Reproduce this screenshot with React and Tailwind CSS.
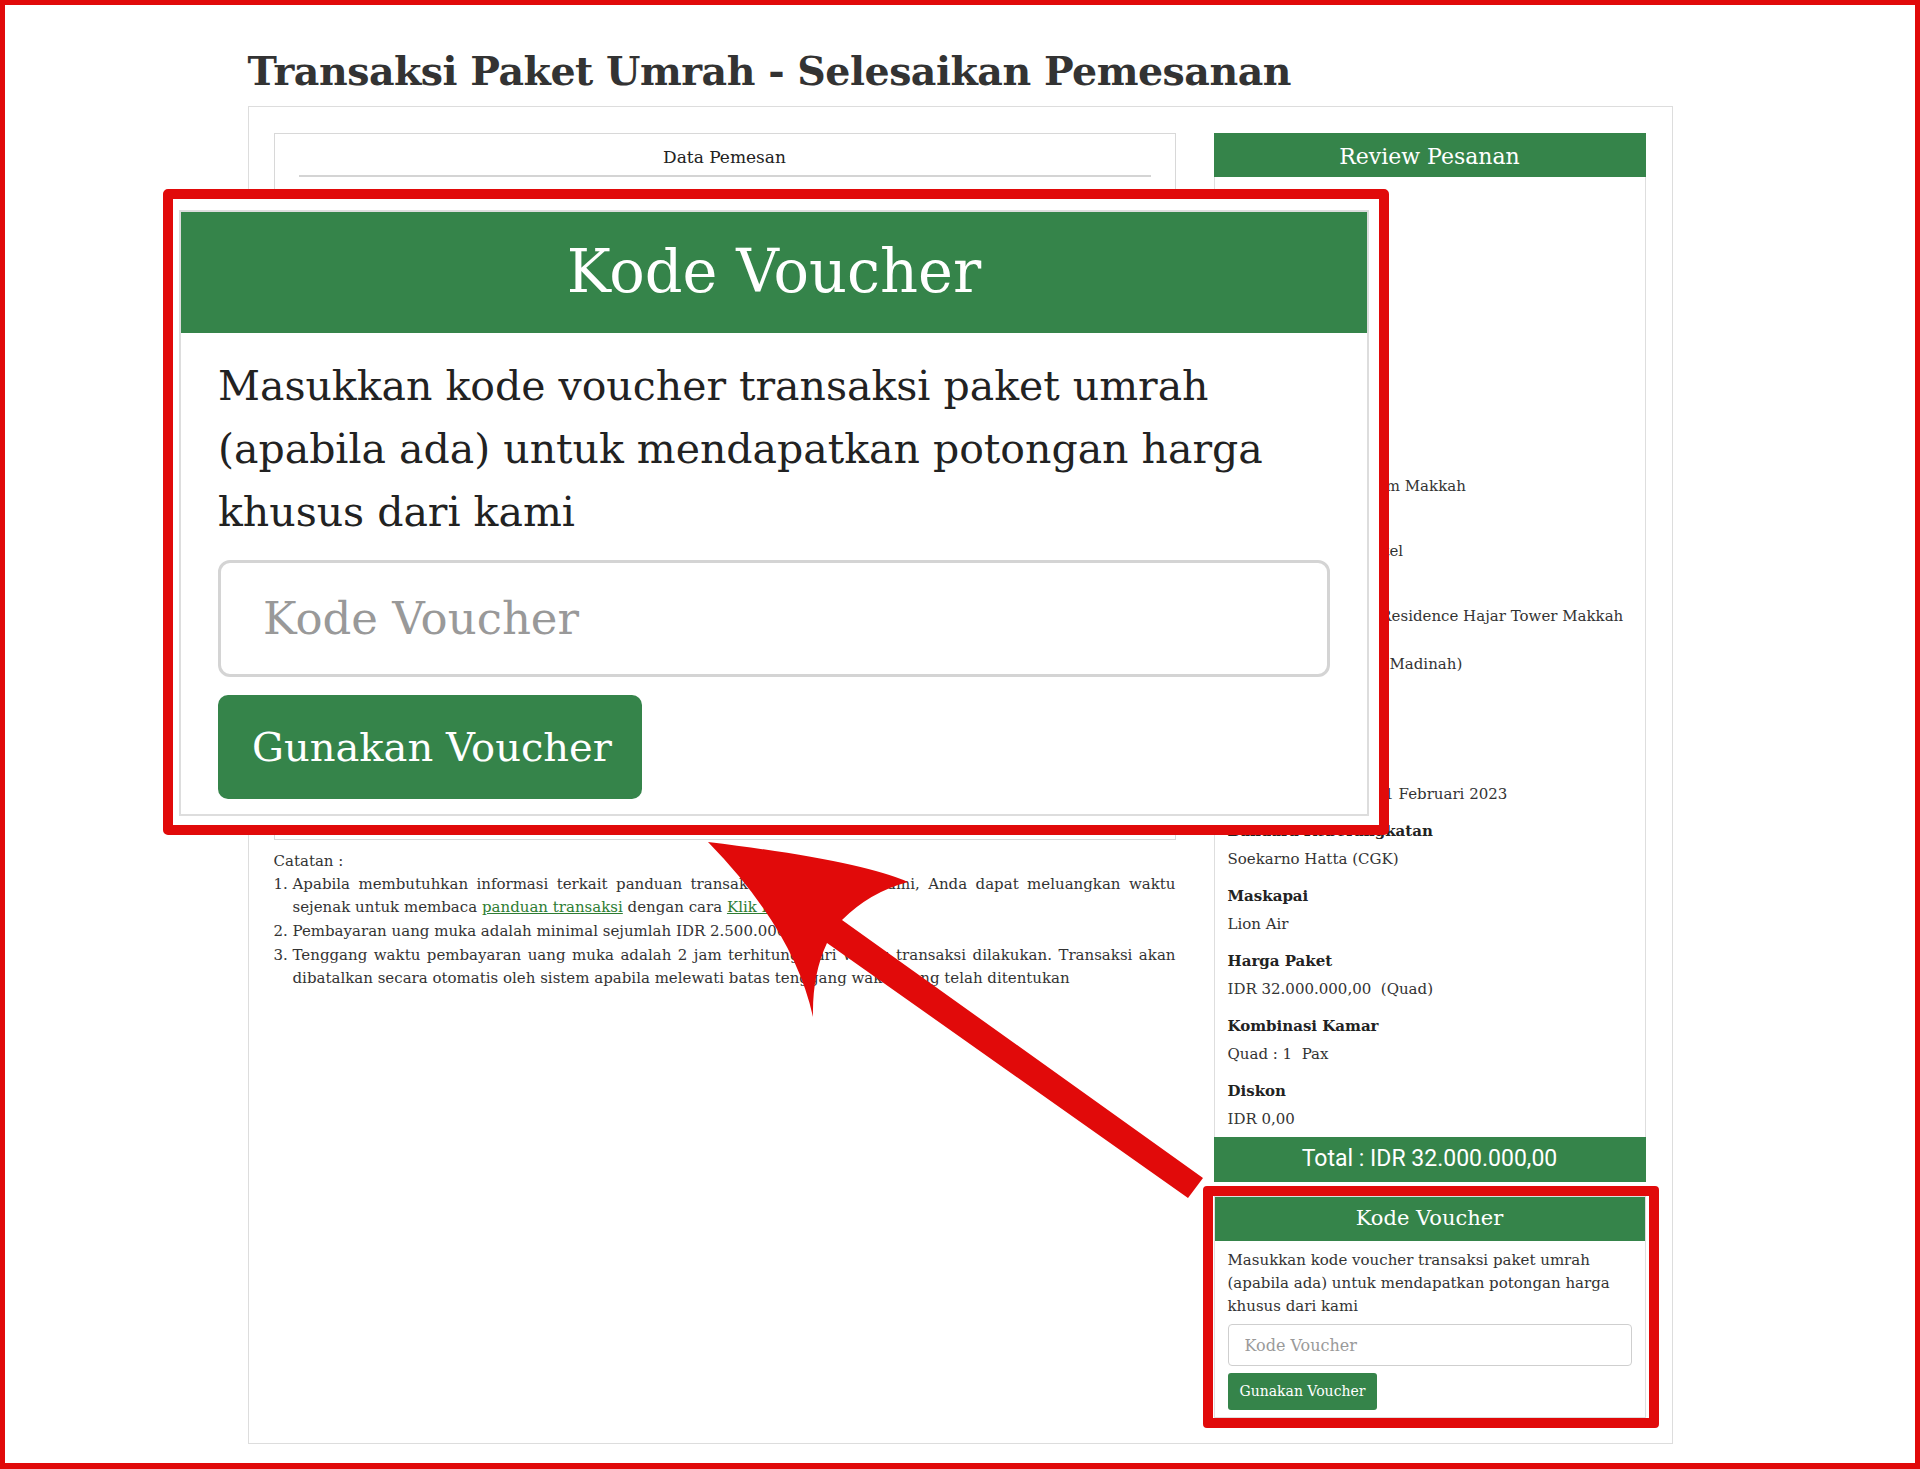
import React from 'react';

const slab = "font-['DejaVu_Serif',serif]";
const sans = "font-['Roboto',sans-serif]";

const reviewItems = [
  { label: 'Nama Paket', value: ['Umrah Reguler'] },
  { label: 'Jumlah Jamaah', value: ['1 Orang'] },
  { label: 'Kota Asal', value: ['Jakarta'] },
  { label: 'Durasi', value: ['11 Hari'] },
  { label: 'Ziarah', value: ['Ziarah Masjidil Haram Makkah'] },
  { label: 'Akomodasi', value: ['Bintang 5 Setara Hotel'] },
  {
    label: 'Hotel',
    value: ['Movenpick Hotel & Residence Hajar Tower Makkah (Makkah)', 'Dallah Taibah Hotel (Madinah)'],
  },
  { label: 'Program', value: ['Umrah Plus'] },
  { label: 'Jadwal', value: ['11 Februari 2023 - 21 Februari 2023'] },
  { label: 'Bandara Keberangkatan', value: ['Soekarno Hatta (CGK)'] },
  { label: 'Maskapai', value: ['Lion Air'] },
  { label: 'Harga Paket', value: ['IDR 32.000.000,00  (Quad)'] },
  { label: 'Kombinasi Kamar', value: ['Quad : 1  Pax'] },
  { label: 'Diskon', value: ['IDR 0,00'] },
];

const formFields = ['Nama Lengkap', 'Email', 'Nomor Telepon', 'Alamat', 'Kota', 'Nomor Paspor'];

const ReviewPesanan = () => (
  <div>
    <div className={`h-[44px] bg-[#35844a] text-white text-[22px] flex items-center justify-center pt-[3px] ${slab}`}>
      Review Pesanan
    </div>
    <div className="border-x border-[#dedede] pl-[13px] pr-[12px] pt-[9px] pb-[6px] text-[15px] text-[#333]">
      {reviewItems.map((item, i) => (
        <div key={item.label} className={i === reviewItems.length - 1 ? '' : 'mb-[13px]'}>
          <div className="font-bold leading-[24px] text-[#222]">{item.label}</div>
          <div className="mt-[4px] leading-[24px] whitespace-pre-wrap">
            {item.value.map((v) => (
              <div key={v}>{v}</div>
            ))}
          </div>
        </div>
      ))}
    </div>
    <div className={`h-[45px] bg-[#35844a] text-white text-[23px] flex items-center justify-center ${sans}`}>
      Total : IDR 32.000.000,00
    </div>
  </div>
);

const KodeVoucher = () => (
  <div className="relative mt-[14px]">
    <div className="border border-[#dedede]">
      <div className="h-[44px] bg-[#35844a] text-white text-[21px] flex items-center justify-center">
        Kode Voucher
      </div>
      <div className="px-[13px] pt-[8px] pb-[7px]">
        <p className="text-[15px] leading-[23px] text-[#333]">
          Masukkan kode voucher transaksi paket umrah (apabila ada) untuk mendapatkan potongan harga khusus dari kami
        </p>
        <input
          placeholder="Kode Voucher"
          className={`mt-[6px] w-full h-[42px] border border-[#cfcfcf] rounded-[4px] px-[16px] text-[16px] placeholder:text-[#9a9a9a] ${slab}`}
        />
        <button className={`mt-[7px] h-[37px] px-[12px] rounded-[3px] bg-[#35844a] text-white text-[14px] ${slab}`}>
          Gunakan Voucher
        </button>
      </div>
    </div>
    {/* red highlight frame */}
    <div className="absolute -left-[11px] -top-[10px] -right-[13px] -bottom-[10px] border-[10px] border-[#e10a0a] rounded-[4px] pointer-events-none" />
  </div>
);

const VoucherZoom = () => (
  <div className="absolute left-[158px] top-[184px] w-[1226px] h-[646px] border-[10px] border-[#e10a0a] rounded-[5px] bg-white pl-[6px] pt-[11px] pr-[10px] pb-[9px]">
    <div className={`h-full border-2 border-[#dddddd] ${slab}`}>
      <div className="h-[121px] bg-[#35844a] text-white text-[59px] flex items-center justify-center">
        Kode Voucher
      </div>
      <div className="px-[37px] pt-[22px]">
        <p className="text-[41px] leading-[63px] text-[#222]">
          Masukkan kode voucher transaksi paket umrah (apabila ada) untuk mendapatkan potongan harga khusus dari kami
        </p>
        <div className="mt-[16px] h-[117px] border-[3px] border-[#d4d4d4] rounded-[12px] flex items-center pl-[42px] text-[45px] text-[#999]">
          Kode Voucher
        </div>
        <div className="mt-[18px] w-[424px] h-[104px] rounded-[10px] bg-[#35844a] text-white text-[40px] flex items-center pl-[34px]">
          Gunakan Voucher
        </div>
      </div>
    </div>
  </div>
);

const Arrow = () => (
  <svg className="absolute -left-[5px] -top-[5px] pointer-events-none" width="1920" height="1469" viewBox="0 0 1920 1469">
    <path
      d="M 708 842 Q 857 860 908 882 Q 870 892 842 920 L 1203 1178 L 1188 1198 L 827 943 Q 812 975 813 1017 Q 794 930 708 842 Z"
      fill="#e10a0a"
    />
  </svg>
);

export default function App() {
  return (
    <div className={`relative w-[1920px] h-[1469px] bg-white border-[5px] border-b-[6px] border-[#e10a0a] overflow-hidden ${slab}`}>
      <div className="w-[1425px] mx-auto pt-[42px]">
        <h1 className="text-[39.5px] leading-[48px] font-bold text-[#333] tracking-[-0.5px]">
          Transaksi Paket Umrah - Selesaikan Pemesanan
        </h1>

        <div className="mt-[11px] border border-[#dddddd] pl-[25px] pr-[26px] pt-[26px] pb-[25px] flex gap-[38px]">
          {/* left: buyer data */}
          <div className="flex-1">
            <div className="h-[707px] border border-[#d8d8d8] px-[24px]">
              <div className="pt-[11px] pb-[6px] border-b-2 border-[#d4d4d4] text-center text-[17px] leading-[24px] text-[#222]">
                Data Pemesan
              </div>
              <div className="pt-[20px] grid grid-cols-2 gap-x-[24px] gap-y-[18px]">
                {formFields.map((f) => (
                  <div key={f}>
                    <div className="text-[15px] font-bold text-[#333] mb-[6px]">{f}</div>
                    <div className="h-[38px] border border-[#cfcfcf] rounded-[4px]" />
                  </div>
                ))}
              </div>
            </div>

            <div className="mt-[10px] text-[15px] leading-[23px] text-[#333]">
              <p>Catatan :</p>
              <ol className="list-decimal pl-[19px] text-justify space-y-[1px]">
                <li>
                  Apabila membutuhkan informasi terkait panduan transaksi paket umrah kami, Anda dapat meluangkan waktu
                  sejenak untuk membaca{' '}
                  <a className="text-[#2e7d32] underline">panduan transaksi</a> dengan cara{' '}
                  <a className="text-[#2e7d32] underline">Klik Disini</a>
                </li>
                <li>Pembayaran uang muka adalah minimal sejumlah IDR 2.500.000,00</li>
                <li>
                  Tenggang waktu pembayaran uang muka adalah 2 jam terhitung dari waktu transaksi dilakukan. Transaksi
                  akan dibatalkan secara otomatis oleh sistem apabila melewati batas tenggang waktu yang telah ditentukan
                </li>
              </ol>
            </div>
          </div>

          {/* right: order summary */}
          <div className="w-[432px]">
            <ReviewPesanan />
            <KodeVoucher />
          </div>
        </div>
      </div>

      <VoucherZoom />
      <Arrow />
    </div>
  );
}
